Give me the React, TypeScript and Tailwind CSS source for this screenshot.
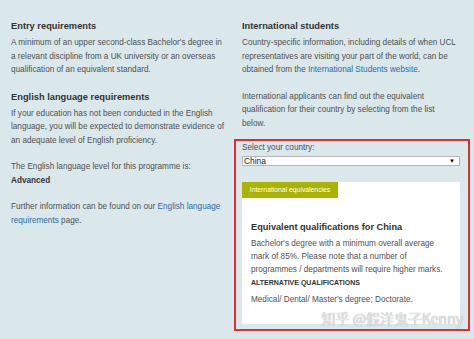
import React from "react";

const body = "text-[8.2px] leading-[13.5px] text-[#505050]";
const heading = "text-[9.3px] leading-[14px] font-bold text-[#333333] mb-[3px]";
const link = "text-[#2d6aa3]";

function LeftColumn() {
  return (
    <div className="w-[234px] shrink-0 pl-[11px] pr-[8px] pt-[19px]">
      <h2 className={heading}>Entry requirements</h2>
      <p className={`${body} mb-[13px]`}>
        A minimum of an upper second-class Bachelor's degree in a relevant discipline from a UK
        university or an overseas qualification of an equivalent standard.
      </p>
      <h2 className={heading}>English language requirements</h2>
      <p className={`${body} mb-[13px]`}>
        If your education has not been conducted in the English language, you will be expected to
        demonstrate evidence of an adequate level of English proficiency.
      </p>
      <p className={`${body} mb-[13px]`}>
        The English language level for this programme is:
        <br />
        <span className="font-bold text-[#333333]">Advanced</span>
      </p>
      <p className={body}>
        Further information can be found on our <span className={link}>English language requirements</span> page.
      </p>
    </div>
  );
}

function CountryBox() {
  return (
    <div className="relative mt-[9px] mr-[4px] border-2 border-[#dc3030] pl-[6px] pr-[8px] pt-[2px] pb-[5px]">
      <div className="text-[8.2px] leading-[10px] text-[#505050]">Select your country:</div>
      <div className="mt-[3px] h-[10px] flex items-center justify-between bg-white border border-[#b5b5b5] pl-[1px] pr-[4px]">
        <span className="text-[8.4px] leading-[8px] text-[#222222]">China</span>
        <span className="text-[6px] leading-[6px] text-black">▼</span>
      </div>

      <div className="mt-[16px] bg-white h-[142px]">
        <div className="w-[96px] h-[16px] bg-[#a9b300] flex items-center justify-center text-[6.8px] text-white">
          International equivalencies
        </div>
        <div className="pl-[9px] pr-[9px] pt-[23px]">
          <h3 className="text-[9.2px] leading-[12px] font-bold text-[#333333] mb-[4px]">
            Equivalent qualifications for China
          </h3>
          <p className="text-[8.2px] leading-[13px] text-[#505050]">
            Bachelor's degree with a minimum overall average mark of 85%. Please note that a number of
            programmes / departments will require higher marks.
            <br />
            <span className="font-bold text-[7px] text-[#333333]">ALTERNATIVE QUALIFICATIONS</span>
          </p>
          <p className="mt-[4px] text-[8.2px] leading-[13px] text-[#505050]">
            Medical/ Dental/ Master's degree; Doctorate.
          </p>
        </div>
      </div>

      <div className="absolute right-[5px] bottom-[3px] text-[14px] leading-[16px] text-[#e8e8e8] [text-shadow:0_0_1px_#8a8a8a] [font-family:'Noto_Sans_CJK_SC','Liberation_Sans',sans-serif] whitespace-nowrap">
        知乎 @假洋鬼子Kenny
      </div>
    </div>
  );
}

function RightColumn() {
  return (
    <div className="flex-1 pt-[19px]">
      <div className="pl-[8px] pr-[18px]">
        <h2 className={heading}>International students</h2>
        <p className={`${body} mb-[13px]`}>
          Country-specific information, including details of when UCL representatives are visiting
          your part of the world, can be obtained from the{" "}
          <span className={link}>International Students website</span>.
        </p>
        <p className={body}>
          International applicants can find out the equivalent qualification for their country by
          selecting from the list below.
        </p>
      </div>
      <CountryBox />
    </div>
  );
}

export default function App() {
  return (
    <div className="w-[474px] h-[339px] overflow-hidden bg-[#dae8eb] flex font-['Liberation_Sans',Arial,sans-serif]">
      <LeftColumn />
      <RightColumn />
    </div>
  );
}
